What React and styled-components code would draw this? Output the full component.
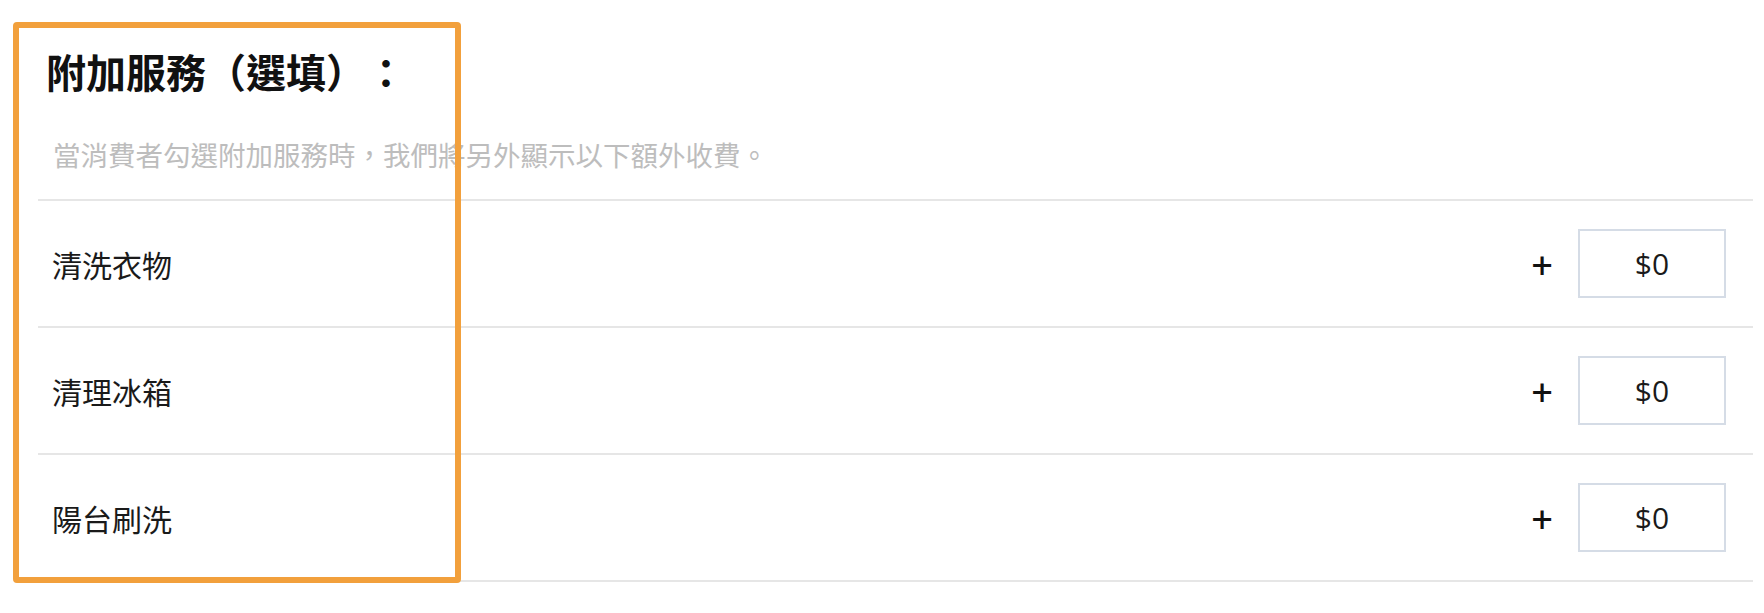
import React from "react";
import styled, { createGlobalStyle } from "styled-components";

const GlobalStyle = createGlobalStyle`
  body {
    margin: 0;
    background: #ffffff;
    font-family: "Noto Sans CJK TC", "Noto Sans", sans-serif;
    color: #111111;
    text-spacing-trim: space-all;
  }
`;

const services = [
  { name: "清洗衣物", price: "$0" },
  { name: "清理冰箱", price: "$0" },
  { name: "陽台刷洗", price: "$0" },
];

const AddOnServices = () => {
  return (
    <>
      <GlobalStyle />
      <Page>
        <Header>
          <Title>附加服務（選填）：</Title>
          <Hint>當消費者勾選附加服務時，我們將另外顯示以下額外收費。</Hint>
        </Header>
        <List>
          {services.map((s) => (
            <Row key={s.name}>
              <Label>{s.name}</Label>
              <PriceGroup>
                <PlusSign>+</PlusSign>
                <PriceBox type="text" defaultValue={s.price} />
              </PriceGroup>
            </Row>
          ))}
        </List>
        <Highlight />
      </Page>
    </>
  );
};

const Page = styled.div`
  position: relative;
  padding: 41px 11px 0 38px;
  height: 613px;
  box-sizing: border-box;
`;

const Header = styled.div`
  display: flex;
  flex-direction: column;
  padding-bottom: 25px;
`;

const Title = styled.h2`
  margin: 0 0 0 8px;
  font-size: 40px;
  font-weight: 700;
  line-height: 60px;
  color: #111111;
  text-spacing-trim: space-all;
`;

const Hint = styled.p`
  margin: 33px 0 0 15px;
  font-size: 27.5px;
  line-height: 40px;
  color: #bdbdbd;
`;

const List = styled.div`
  display: flex;
  flex-direction: column;
  border-bottom: 2px solid #e6e6e6;
`;

const Row = styled.div`
  display: flex;
  align-items: center;
  justify-content: space-between;
  height: 125px;
  padding: 0 27px 0 14px;
  border-top: 2px solid #e6e6e6;
`;

const Label = styled.span`
  font-size: 30px;
  color: #1a1a1a;
`;

const PriceGroup = styled.div`
  display: flex;
  align-items: center;
`;

const PlusSign = styled.span`
  font-family: "Noto Sans", sans-serif;
  font-size: 38px;
  font-weight: 500;
  line-height: 1;
  margin-right: 25px;
  color: #111111;
`;

const PriceBox = styled.input`
  width: 148px;
  height: 69px;
  box-sizing: border-box;
  border: 2px solid #d5dce6;
  border-radius: 0;
  background: #ffffff;
  font-family: "Open Sans", "Noto Sans", sans-serif;
  font-size: 30px;
  color: #1a1a1a;
  text-align: center;
  outline: none;
  padding: 0;
`;

// annotation frame drawn over the left part of the panel
const Highlight = styled.div`
  position: absolute;
  left: 13px;
  top: 22px;
  width: 448px;
  height: 561px;
  box-sizing: border-box;
  border: 6px solid #f2a03c;
  border-radius: 4px;
  pointer-events: none;
`;

export default AddOnServices;
